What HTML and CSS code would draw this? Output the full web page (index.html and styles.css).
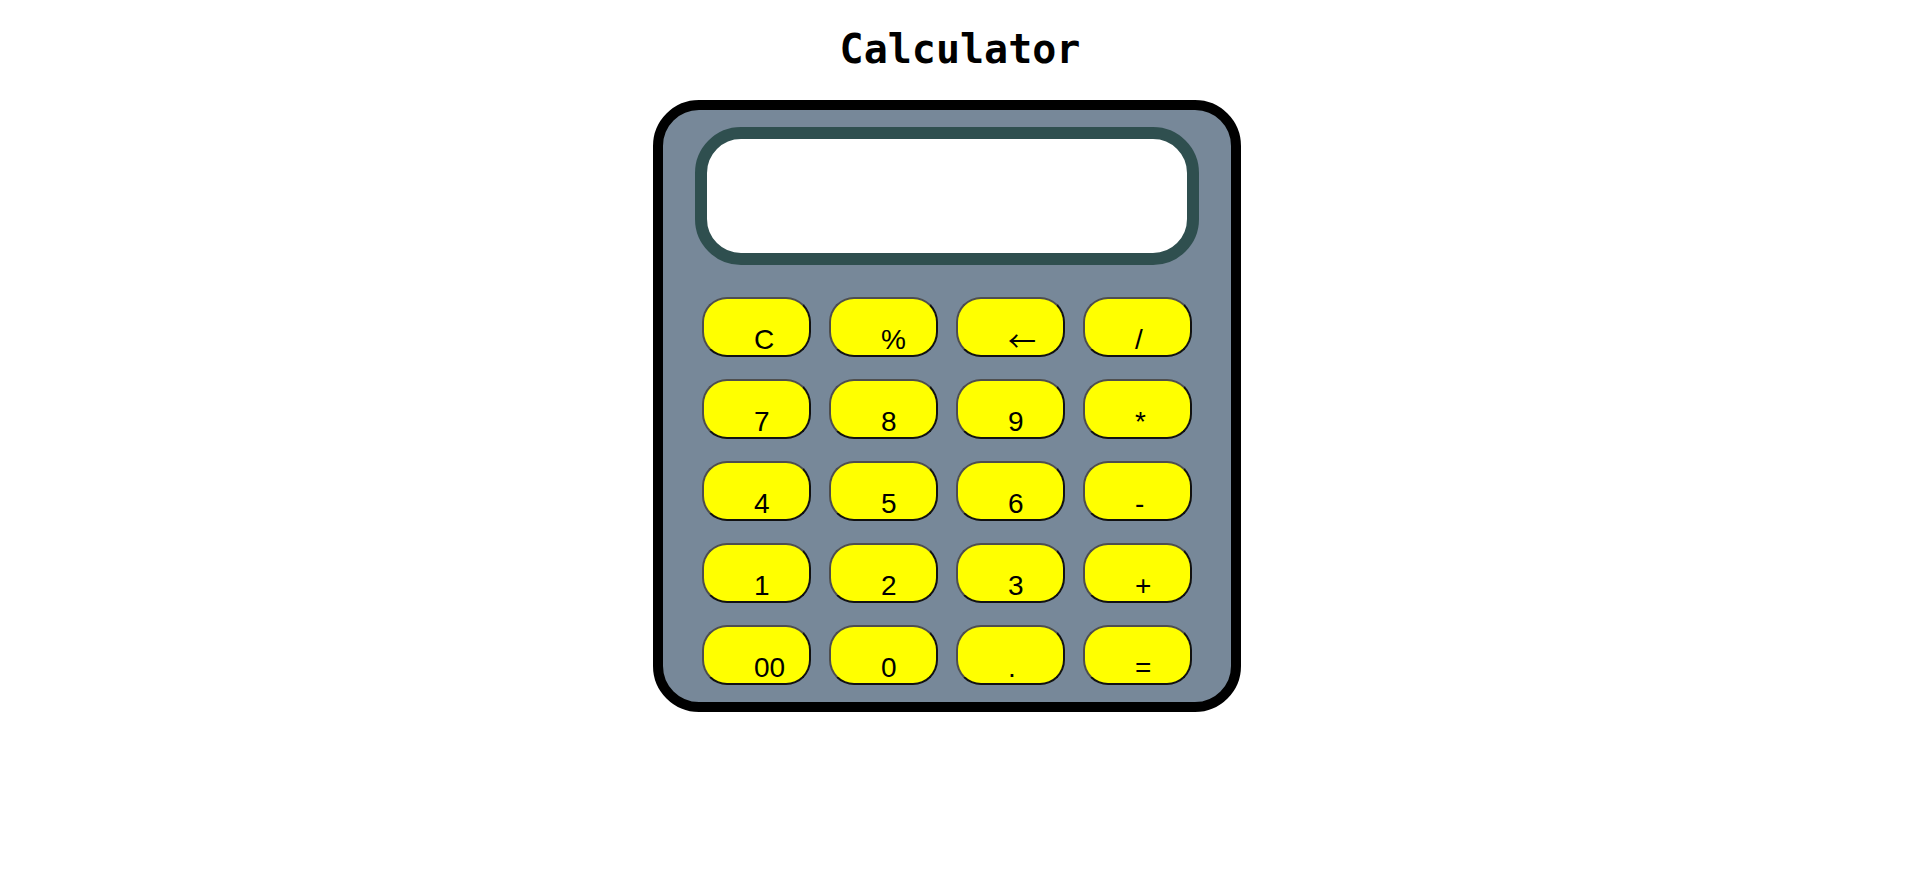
FILE: index.html
```html
<!DOCTYPE html>
<html lang="en">
<head>
<meta charset="utf-8">
<title>Calculator</title>
<link rel="stylesheet" href="styles.css">
</head>
<body>
<h1 class="title">Calculator</h1>
<div class="stage">
  <div class="calculator">
    <div class="screen"></div>
    <div class="keys">
      <button class="key">C</button>
      <button class="key">%</button>
      <button class="key"><span class="arrow">&larr;</span></button>
      <button class="key">/</button>
      <button class="key">7</button>
      <button class="key">8</button>
      <button class="key">9</button>
      <button class="key">*</button>
      <button class="key">4</button>
      <button class="key">5</button>
      <button class="key">6</button>
      <button class="key">-</button>
      <button class="key">1</button>
      <button class="key">2</button>
      <button class="key">3</button>
      <button class="key">+</button>
      <button class="key">00</button>
      <button class="key">0</button>
      <button class="key">.</button>
      <button class="key">=</button>
    </div>
  </div>
</div>
</body>
</html>
```

FILE: styles.css
```css
html, body {
  margin: 0;
  padding: 0;
  background: #ffffff;
}

.title {
  margin: 26px 0 0;
  font-family: "DejaVu Sans Mono", monospace;
  font-weight: bold;
  font-size: 40px;
  line-height: 46px;
  text-align: center;
  color: #000;
}

.stage {
  display: flex;
  justify-content: center;
  padding-right: 26px;
  margin-top: 28px;
}

.calculator {
  box-sizing: border-box;
  width: 588px;
  height: 612px;
  border: 10px solid #000;
  border-radius: 46px;
  background: #778899;
  padding: 17px 0 17px;
  display: flex;
  flex-direction: column;
  align-items: center;
}

.screen {
  box-sizing: border-box;
  width: 504px;
  height: 138px;
  border: 12px solid #2f4f4f;
  border-radius: 46px;
  background: #ffffff;
  flex: none;
}

.keys {
  margin-top: 32px;
  display: grid;
  grid-template-columns: repeat(4, 109px);
  grid-auto-rows: 60px;
  column-gap: 18px;
  row-gap: 22px;
}

.key {
  box-sizing: border-box;
  width: 109px;
  height: 60px;
  margin: 0;
  padding: 25px 0 0 50px;
  border: 2px solid;
  border-color: #4e4e4e #111111 #111111 #4e4e4e;
  border-radius: 25px;
  background: #ffff00;
  color: #000;
  font-family: "Liberation Sans", Arial, sans-serif;
  font-size: 28px;
  line-height: 32px;
  text-align: left;
  cursor: pointer;
}

.arrow {
  font-family: "Noto Sans CJK JP", "Liberation Sans", sans-serif;
  font-size: 28px;
  line-height: 32px;
  vertical-align: -3px;
}
```
